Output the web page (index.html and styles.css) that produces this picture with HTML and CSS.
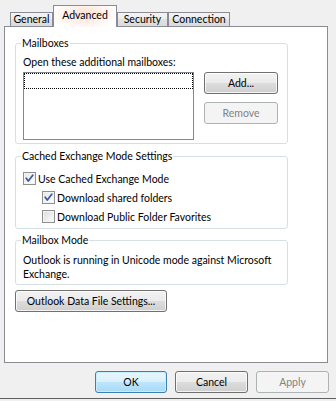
FILE: index.html
```html
<!DOCTYPE html>
<html>
<head>
<meta charset="utf-8">
<link rel="stylesheet" href="styles.css">
</head>
<body>
<div class="dialog">
  <div class="tabs">
    <div class="tab t-general">General</div>
    <div class="tab sel t-advanced">Advanced</div>
    <div class="tab t-security">Security</div>
    <div class="tab t-connection">Connection</div>
  </div>
  <div class="panel">
    <fieldset class="group g1">
      <legend>Mailboxes</legend>
      <div class="label">Open these additional mailboxes:</div>
      <div class="mb-row">
        <div class="listbox"><div class="focusrow"></div></div>
        <div class="mb-buttons">
          <button class="btn side">Add...</button>
          <button class="btn side disabled">Remove</button>
        </div>
      </div>
    </fieldset>
    <fieldset class="group g2">
      <legend>Cached Exchange Mode Settings</legend>
      <div class="check">
        <span class="box on"><svg viewBox="0 0 11 11" width="11" height="11"><path d="M2.2 5.2 L4.3 8 L8.8 2.2" fill="none" stroke="#3d5ba9" stroke-width="1.8" stroke-linecap="round" stroke-linejoin="round"/></svg></span>
        <span>Use Cached Exchange Mode</span>
      </div>
      <div class="check sub">
        <span class="box on"><svg viewBox="0 0 11 11" width="11" height="11"><path d="M2.2 5.2 L4.3 8 L8.8 2.2" fill="none" stroke="#3d5ba9" stroke-width="1.8" stroke-linecap="round" stroke-linejoin="round"/></svg></span>
        <span>Download shared folders</span>
      </div>
      <div class="check sub">
        <span class="box"></span>
        <span>Download Public Folder Favorites</span>
      </div>
    </fieldset>
    <fieldset class="group g3">
      <legend>Mailbox Mode</legend>
      <div class="desc">Outlook is running in Unicode mode against Microsoft<br>Exchange.</div>
    </fieldset>
    <button class="btn datafile">Outlook Data File Settings...</button>
  </div>
  <div class="footer">
    <button class="btn default b-ok">OK</button>
    <button class="btn b-cancel">Cancel</button>
    <button class="btn disabled b-apply">Apply</button>
  </div>
  <div class="edge"></div>
</div>
</body>
</html>
```

FILE: styles.css
```css
body {
  margin: 0;
  background: #f0f0f0;
  font-family: Lato, "Noto Sans", sans-serif;
  font-size: 10.5px;
  color: #000;
}
.dialog {
  width: 336px;
  height: 401px;
  overflow: hidden;
}
.tabs {
  display: flex;
  align-items: flex-end;
  height: 21px;
  margin-top: 5px;
  padding-left: 10px;
}
.tab {
  box-sizing: border-box;
  height: 14px;
  line-height: 12px;
  border: 1px solid #898c95;
  border-bottom: 0;
  background: linear-gradient(#f4f4f4, #ececec 50%, #e2e2e2 50%, #dadada);
  text-align: center;
  white-space: nowrap;
}
.t-general { width: 43px; }
.t-advanced { width: 64px; }
.t-security { width: 51px; }
.t-connection { width: 62px; }
.tab.sel {
  height: 22px;
  margin-bottom: -1px;
  padding-top: 2px;
  line-height: 14px;
  position: relative;
  z-index: 1;
  background:
    radial-gradient(ellipse 55% 75% at 50% 40%, rgba(252, 196, 170, 0.55), rgba(253, 214, 196, 0.3) 60%, rgba(255, 255, 255, 0) 100%),
    #fff;
}
.panel {
  box-sizing: border-box;
  width: 324px;
  height: 337px;
  margin-left: 4px;
  border: 1px solid #898c95;
  background: #fff;
  padding: 9px 0 0 10px;
}
.group {
  box-sizing: border-box;
  width: 273px;
  margin: 0;
  border: 1px solid #d5dfe5;
  border-radius: 3px;
  padding: 4px 9px 3px 7px;
  min-inline-size: 0;
}
.group legend {
  padding: 0 1px;
  margin-left: -2px;
  line-height: 15px;
}
.label {
  line-height: 15px;
}
.mb-row {
  display: flex;
  gap: 10px;
  margin-top: 2px;
}
.listbox {
  box-sizing: border-box;
  width: 171px;
  height: 68px;
  border: 1px solid #828790;
  background: #fff;
}
.focusrow {
  box-sizing: border-box;
  height: 16px;
  border: 1px dotted #000;
}
.mb-buttons {
  display: flex;
  flex-direction: column;
  gap: 8px;
}
.btn {
  box-sizing: border-box;
  height: 22px;
  margin: 0;
  padding: 0;
  border: 1px solid #707070;
  border-radius: 3px;
  background: linear-gradient(#f2f2f2, #ebebeb 50%, #dddddd 50%, #cfcfcf);
  box-shadow: inset 0 0 0 1px rgba(255, 255, 255, 0.75);
  font: inherit;
  color: #000;
  line-height: 20px;
  text-align: center;
}
.btn.side { width: 74px; }
.btn.disabled {
  border-color: #adb2b5;
  background: #f4f4f4;
  box-shadow: none;
  color: #838383;
}
.g2 {
  margin-top: 5px;
  padding: 5px 9px 2px 7px;
}
.check {
  display: flex;
  align-items: center;
  gap: 2px;
  height: 19px;
}
.check.sub { padding-left: 19px; }
.box {
  box-sizing: border-box;
  width: 13px;
  height: 13px;
  border: 1px solid #8e8f8f;
  background: linear-gradient(135deg, #dcdcdc, #fdfdfd);
  box-shadow: inset 0 0 0 1px #f4f4f4;
  display: flex;
  align-items: center;
  justify-content: center;
  flex: none;
}
.box.on {
  background: linear-gradient(135deg, #e6e6e6, #ffffff);
}
.g3 {
  margin-top: 4px;
  padding: 5px 9px 3px 7px;
}
.desc {
  line-height: 14px;
  white-space: nowrap;
}
.btn.datafile {
  display: block;
  width: 152px;
  margin-top: 5px;
}
.footer {
  display: flex;
  justify-content: flex-end;
  gap: 8px;
  padding-right: 7px;
  margin-top: 8px;
}
.b-ok { width: 72px; }
.b-cancel, .b-apply { width: 73px; }
.btn.default {
  border-color: #3c7fb1;
  background: linear-gradient(#eaf6fd, #d9f0fc 50%, #bee6fd 50%, #a7d9f5);
  box-shadow: inset 0 0 0 1px #c7eefc;
}
.edge {
  height: 1px;
  margin-top: 5px;
  background: #5f5f5f;
}
```
